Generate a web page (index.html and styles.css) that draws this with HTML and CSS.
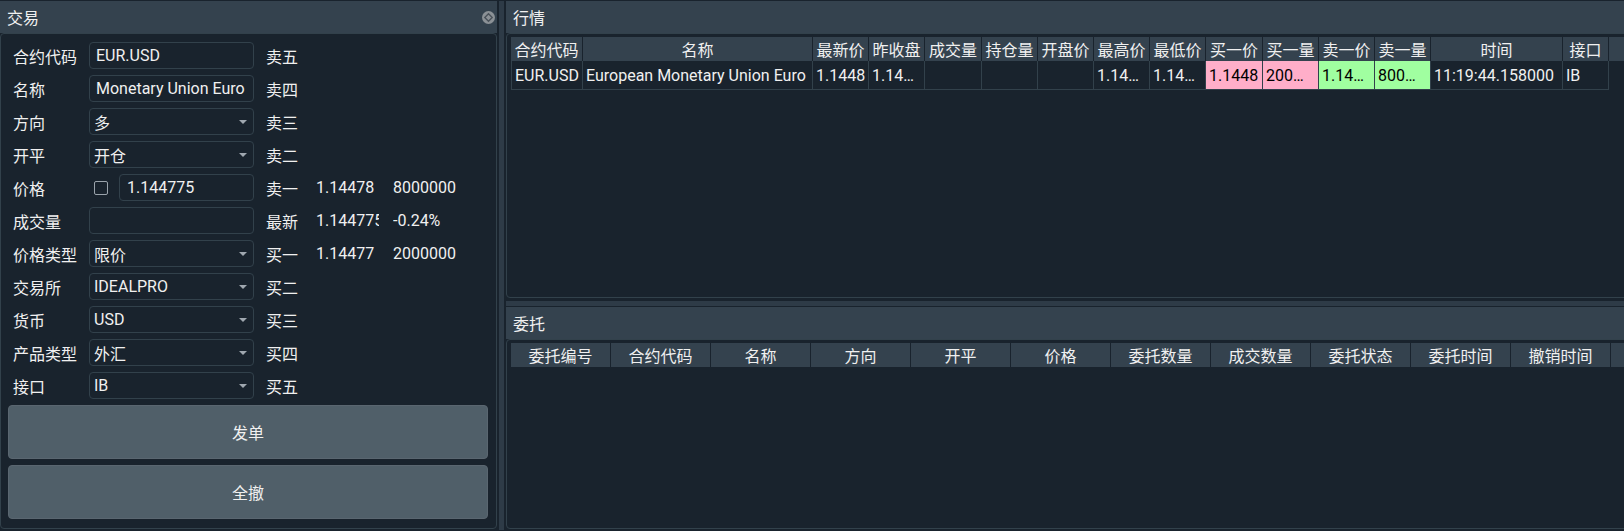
FILE: index.html
```html
<html>

<head>
  <title>VN Trader</title>
  <link rel="stylesheet" href="styles.css">
</head>

<body>
  <div class="app">
    <section class="dock trade">
      <div class="dock-title">
        <span>交易</span>
        <svg class="close" width="13" height="13" viewBox="0 0 13 13">
          <circle cx="6.5" cy="6.5" r="6.5" fill="#8b9196" />
          <path d="M6.5 2.8 L10.2 6.5 L6.5 10.2 L2.8 6.5 Z" fill="none" stroke="#4a525a" stroke-width="1.4" />
        </svg>
      </div>
      <div class="dock-body trade-body">
        <div class="form">
          <div class="label">合约代码</div>
          <input class="edit" type="text" value="EUR.USD" />
          <div class="side">卖五</div>
          <div></div>
          <div></div>

          <div class="label">名称</div>
          <input class="edit" type="text" value="Monetary Union Euro" />
          <div class="side">卖四</div>
          <div></div>
          <div></div>

          <div class="label">方向</div>
          <div class="combo"><span>多</span><i class="arrow"></i></div>
          <div class="side">卖三</div>
          <div></div>
          <div></div>

          <div class="label">开平</div>
          <div class="combo"><span>开仓</span><i class="arrow"></i></div>
          <div class="side">卖二</div>
          <div></div>
          <div></div>

          <div class="label">价格</div>
          <div class="price">
            <input class="check" type="checkbox" />
            <input class="edit" type="text" value="1.144775" />
          </div>
          <div class="side">卖一</div>
          <div class="val">1.14478</div>
          <div class="val">8000000</div>

          <div class="label">成交量</div>
          <input class="edit" type="text" value="" />
          <div class="side">最新</div>
          <div class="val">1.144775</div>
          <div class="val">-0.24%</div>

          <div class="label">价格类型</div>
          <div class="combo"><span>限价</span><i class="arrow"></i></div>
          <div class="side">买一</div>
          <div class="val">1.14477</div>
          <div class="val">2000000</div>

          <div class="label">交易所</div>
          <div class="combo"><span>IDEALPRO</span><i class="arrow"></i></div>
          <div class="side">买二</div>
          <div></div>
          <div></div>

          <div class="label">货币</div>
          <div class="combo"><span>USD</span><i class="arrow"></i></div>
          <div class="side">买三</div>
          <div></div>
          <div></div>

          <div class="label">产品类型</div>
          <div class="combo"><span>外汇</span><i class="arrow"></i></div>
          <div class="side">买四</div>
          <div></div>
          <div></div>

          <div class="label">接口</div>
          <div class="combo"><span>IB</span><i class="arrow"></i></div>
          <div class="side">买五</div>
          <div></div>
          <div></div>
        </div>
        <button class="btn">发单</button>
        <button class="btn">全撤</button>
      </div>
    </section>

    <div class="vsplit"></div>

    <div class="right">
      <section class="dock market">
        <div class="dock-title"><span>行情</span></div>
        <div class="dock-body table-body">
          <table class="grid">
            <tr>
              <th class="w72">合约代码</th>
              <th class="w230">名称</th>
              <th class="w56">最新价</th>
              <th class="w56">昨收盘</th>
              <th class="w57">成交量</th>
              <th class="w56">持仓量</th>
              <th class="w56">开盘价</th>
              <th class="w56">最高价</th>
              <th class="w56">最低价</th>
              <th class="w57">买一价</th>
              <th class="w56">买一量</th>
              <th class="w56">卖一价</th>
              <th class="w56">卖一量</th>
              <th class="w132">时间</th>
              <th class="w46">接口</th>
              <th class="fill"></th>
            </tr>
            <tr>
              <td>EUR.USD</td>
              <td>European Monetary Union Euro</td>
              <td>1.1448</td>
              <td>1.14…</td>
              <td></td>
              <td></td>
              <td></td>
              <td>1.14…</td>
              <td>1.14…</td>
              <td class="bid">1.1448</td>
              <td class="bid">200…</td>
              <td class="ask">1.14…</td>
              <td class="ask">800…</td>
              <td>11:19:44.158000</td>
              <td>IB</td>
              <td class="fill"></td>
            </tr>
          </table>
        </div>
      </section>

      <div class="hsplit"></div>

      <section class="dock orders">
        <div class="dock-title"><span>委托</span></div>
        <div class="dock-body table-body">
          <table class="grid">
            <tr>
              <th class="w100">委托编号</th>
              <th class="w100">合约代码</th>
              <th class="w100">名称</th>
              <th class="w100">方向</th>
              <th class="w100">开平</th>
              <th class="w100">价格</th>
              <th class="w100">委托数量</th>
              <th class="w100">成交数量</th>
              <th class="w100">委托状态</th>
              <th class="w100">委托时间</th>
              <th class="w100">撤销时间</th>
              <th class="w100"></th>
              <th class="fill"></th>
            </tr>
          </table>
        </div>
      </section>
    </div>
  </div>
</body>

</html>
```

FILE: styles.css
```css
body {
  margin: 0;
  background: #19232d;
  color: #f0f0f0;
  font-family: Roboto, 'Noto Sans CJK SC', sans-serif;
  font-size: 16px;
  overflow: hidden;
}

.app {
  display: flex;
  align-items: flex-start;
  height: 529px;
  padding-top: 1px;
}

.dock {
  display: flex;
  flex-direction: column;
}

.dock-title {
  display: flex;
  align-items: center;
  justify-content: space-between;
  height: 32px;
  padding: 0 2px 0 7px;
  background: #34424e;
}

.dock-body {
  box-sizing: border-box;
  border: 1px solid #32414b;
  border-radius: 4px;
}

/* trade panel */

.trade {
  width: 497px;
  flex-shrink: 0;
}

.trade-body {
  display: flex;
  flex-direction: column;
  height: 496px;
  padding: 8px 8px 9px 7px;
}

.form {
  display: grid;
  grid-template-columns: 76px 165px 62px 77px 1fr;
  grid-auto-rows: 27px;
  row-gap: 6px;
  align-items: center;
  margin-left: 5px;
}

.side {
  padding-left: 12px;
}

.val {
  width: 63px;
  overflow: hidden;
  white-space: nowrap;
}

.edit,
.combo {
  box-sizing: border-box;
  height: 27px;
  width: 100%;
  margin: 0;
  border: 1px solid #32414b;
  border-radius: 4px;
  background: #19232d;
  color: #f0f0f0;
  font: inherit;
}

.edit {
  padding: 0 6px;
  outline: none;
}

.combo {
  display: flex;
  align-items: center;
  padding: 0 6px 0 4px;
}

.arrow {
  margin-left: auto;
  width: 0;
  height: 0;
  border-left: 4px solid transparent;
  border-right: 4px solid transparent;
  border-top: 4px solid #a0a8b0;
}

.price {
  display: flex;
  align-items: center;
  gap: 11px;
}

.check {
  -webkit-appearance: none;
  appearance: none;
  box-sizing: border-box;
  flex-shrink: 0;
  width: 14px;
  height: 14px;
  margin: 0 0 0 5px;
  border: 1px solid #9aa3ab;
  border-radius: 2px;
  background: #19232d;
}

.price .edit {
  flex: 1;
  padding-left: 7px;
}

.btn {
  box-sizing: border-box;
  height: 54px;
  margin-top: 6px;
  border: 1px solid #5a6670;
  border-radius: 4px;
  background: #505f69;
  color: #f0f0f0;
  font: inherit;
}

/* splitters */

.vsplit {
  align-self: stretch;
  flex-shrink: 0;
  width: 5px;
  margin: 0 2px;
  background: #2e3b47;
}

.hsplit {
  flex-shrink: 0;
  height: 5px;
  margin: 3px 0 1px;
  background: #2e3b47;
}

/* right side */

.right {
  display: flex;
  flex-direction: column;
  width: 1130px;
  flex-shrink: 0;
}

.table-body {
  padding: 3px 4px;
  overflow: hidden;
}

.market .table-body {
  height: 265px;
}

.orders .table-body {
  height: 190px;
}

.grid {
  width: 100%;
  table-layout: fixed;
  border-collapse: separate;
  border-spacing: 0;
}

.grid th {
  box-sizing: border-box;
  height: 24px;
  padding: 0;
  background: #34424e;
  border-right: 1px solid #19232d;
  font-weight: normal;
  text-align: center;
  white-space: nowrap;
  overflow: hidden;
}

.grid td {
  box-sizing: border-box;
  height: 29px;
  padding: 0 1px 0 3px;
  border-right: 1px solid #32414b;
  border-bottom: 1px solid #32414b;
  white-space: nowrap;
  overflow: hidden;
}

.grid td:first-child {
  border-left: 1px solid #32414b;
}

.grid th.fill {
  border-right: none;
}

.grid td.fill {
  border: none;
}

.grid .bid {
  background: #ffaec9;
  color: #000;
}

.grid .ask {
  background: #a0ffa0;
  color: #000;
}

.w46 { width: 46px; }
.w56 { width: 56px; }
.w57 { width: 57px; }
.w72 { width: 72px; }
.w100 { width: 100px; }
.w132 { width: 132px; }
.w230 { width: 230px; }
```
